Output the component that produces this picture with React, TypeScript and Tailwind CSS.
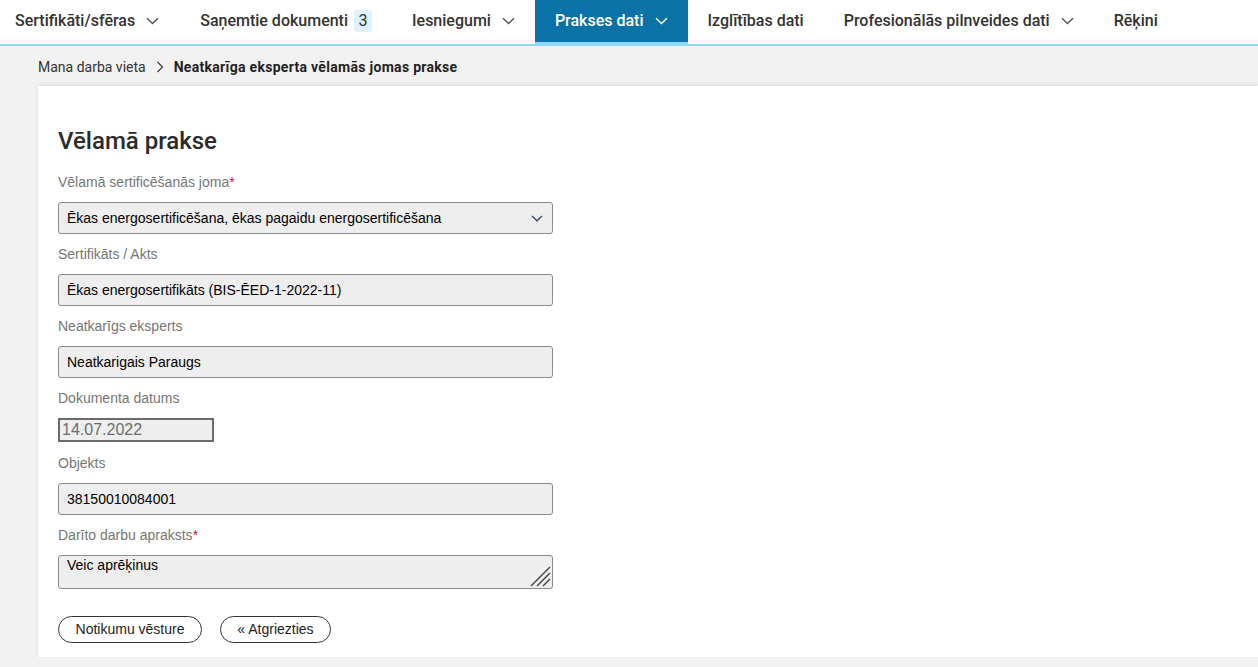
import React from "react";

function Chevron({ className = "" }: { className?: string }) {
  return (
    <svg width="13" height="8" viewBox="0 0 13 8" className={className} fill="none">
      <path d="M1 1.2 L6.5 6.5 L12 1.2" stroke="currentColor" strokeWidth="1.4" />
    </svg>
  );
}

function NavItem({
  label,
  chevron,
  active,
  first,
  badge,
}: {
  label: string;
  chevron?: boolean;
  active?: boolean;
  first?: boolean;
  badge?: string;
}) {
  return (
    <div
      className={
        "flex h-[44px] items-center text-[16px] " +
        (first ? "pl-[15px] pr-[21px] " : "pl-5 pr-5 ") +
        (active
          ? "bg-[#0b72a8] text-white font-medium border-b-2 border-[#8ed8f8]"
          : "text-[#333] font-medium border-b-2 border-transparent")
      }
    >
      <span>{label}</span>
      {badge && (
        <span className="ml-[6px] flex h-[22px] min-w-[18px] items-center justify-center rounded-[3px] bg-[#dff1fc] px-[4px] font-normal text-[#333]">
          {badge}
        </span>
      )}
      {chevron && <Chevron className={"ml-[11px] " + (active ? "text-white" : "text-[#555]")} />}
    </div>
  );
}

function Label({ text, required }: { text: string; required?: boolean }) {
  return (
    <div className="h-[20px] text-[14px] leading-[20px] text-[#767676]">
      {text}
      {required && <span className="text-[#d0122e]">*</span>}
    </div>
  );
}

function Box({ value, select }: { value: string; select?: boolean }) {
  return (
    <div className="mt-[10px] mb-[10px] flex h-[32px] w-[495px] items-center justify-between rounded-[3px] border border-[#8c8c8c] bg-[#eeeeee] px-[8px] text-[14px] text-black">
      <span>{value}</span>
      {select && (
        <svg width="12" height="7" viewBox="0 0 12 7" fill="none" className="mr-[1px] text-[#3a4a66]">
          <path d="M1 1 L6 5.8 L11 1" stroke="currentColor" strokeWidth="1.3" />
        </svg>
      )}
    </div>
  );
}

export default function App() {
  return (
    <div className="min-h-screen bg-[#f2f2f2]" style={{ fontFamily: "Roboto, 'Liberation Sans', sans-serif" }}>
      <nav className="flex h-[46px] border-b-2 border-[#8ed8f8] bg-white">
        <NavItem label="Sertifikāti/sfēras" chevron first />
        <NavItem label="Saņemtie dokumenti" badge="3" />
        <NavItem label="Iesniegumi" chevron />
        <NavItem label="Prakses dati" chevron active />
        <NavItem label="Izglītības dati" />
        <NavItem label="Profesionālās pilnveides dati" chevron />
        <NavItem label="Rēķini" />
      </nav>

      <div className="flex h-[40px] items-center pl-[38px] pt-[2px] text-[14px] text-[#333]">
        <span>Mana darba vieta</span>
        <svg width="8" height="12" viewBox="0 0 8 12" fill="none" className="ml-[10px] mr-[10px] text-[#444]">
          <path d="M1.5 1 L6.5 6 L1.5 11" stroke="currentColor" strokeWidth="1.3" />
        </svg>
        <span className="font-bold tracking-[0.3px] text-[#222]">Neatkarīga eksperta vēlamās jomas prakse</span>
      </div>

      <div className="ml-[38px] h-[571px] bg-white pl-[20px] pt-[39px] shadow-[0_-2px_4px_rgba(0,0,0,0.08)]">
        <h1 className="h-[32px] text-[24px] font-medium leading-[32px] text-[#2b2b2b]">Vēlamā prakse</h1>
        <div className="mt-[15px]" style={{ fontFamily: "'Liberation Sans', Arial, sans-serif" }}>
          <Label text="Vēlamā sertificēšanās joma" required />
          <Box value="Ēkas energosertificēšana, ēkas pagaidu energosertificēšana" select />
          <Label text="Sertifikāts / Akts" />
          <Box value="Ēkas energosertifikāts (BIS-ĒED-1-2022-11)" />
          <Label text="Neatkarīgs eksperts" />
          <Box value="Neatkarigais Paraugs" />
          <Label text="Dokumenta datums" />
          <div className="mt-[10px] mb-[11px] flex h-[24px] w-[156px] items-center border-2 border-[#6b6b6b] bg-[#eeeeee] px-[2px] text-[16px] text-[#6d6d6d]">
            14.07.2022
          </div>
          <Label text="Objekts" />
          <Box value="38150010084001" />
          <Label text="Darīto darbu apraksts" required />
          <div className="relative mt-[10px] h-[34px] w-[495px] rounded-[3px] border border-[#8c8c8c] bg-[#eeeeee] px-[8px] pt-[1px] text-[14px] leading-[16px] text-black">
            Veic aprēķinus
            <svg width="22" height="22" viewBox="0 0 22 22" className="absolute bottom-[1px] right-[1px]" fill="none">
              <path d="M21 2 L2 21 M21 8 L8 21 M21 14 L14 21" stroke="#4a4a4a" strokeWidth="1.5" />
            </svg>
          </div>
          <div className="mt-[27px] flex gap-[18px]">
            <button className="flex h-[27px] w-[144px] items-center justify-center rounded-full border border-[#333] bg-white text-[14px] text-[#222]">
              Notikumu vēsture
            </button>
            <button className="flex h-[27px] w-[111px] items-center justify-center rounded-full border border-[#333] bg-white text-[14px] text-[#222]">
              « Atgriezties
            </button>
          </div>
        </div>
      </div>
    </div>
  );
}
